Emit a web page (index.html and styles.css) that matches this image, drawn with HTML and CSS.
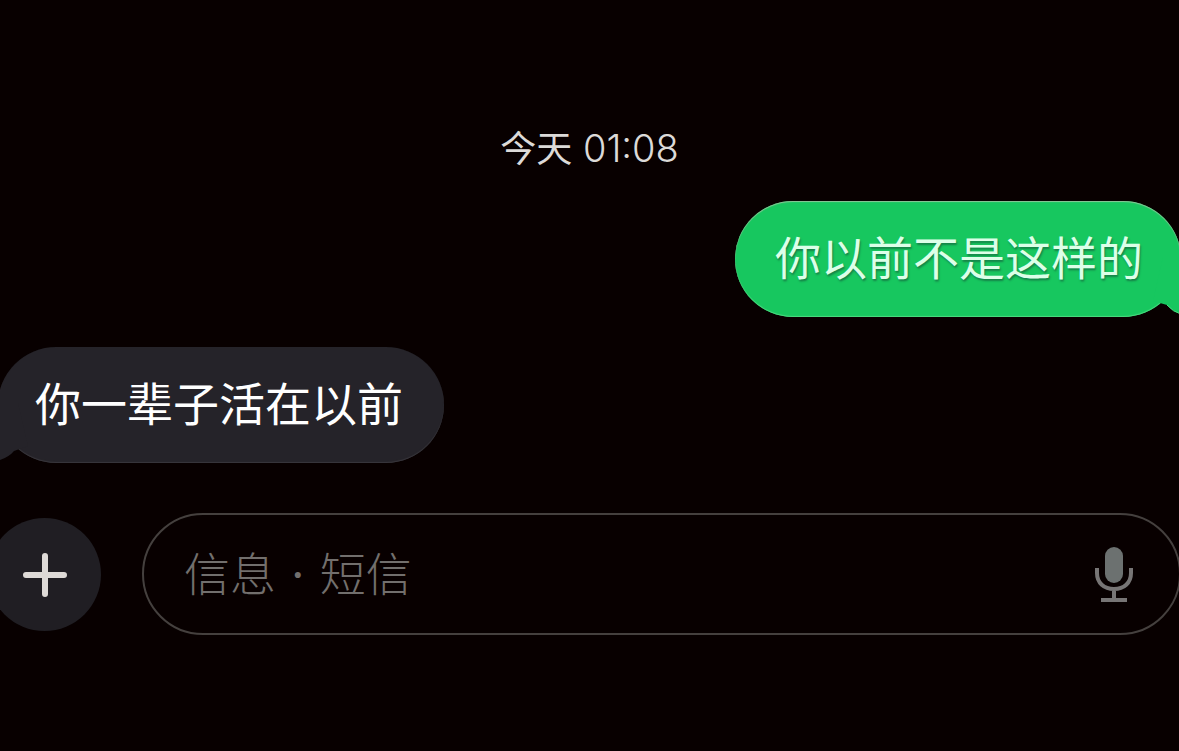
FILE: index.html
```html
<!DOCTYPE html>
<html lang="zh-CN">
<head>
<meta charset="utf-8">
<meta name="viewport" content="width=device-width, initial-scale=1">
<title>信息</title>
<link rel="stylesheet" href="styles.css">
</head>
<body>
<main class="chat">
  <time class="stamp" datetime="01:08">今天<span class="clock"> 01:08</span></time>
  <section class="thread">
    <p class="bubble sent">你以前不是这样的
      <svg class="tail" viewBox="0 0 28 60" aria-hidden="true"><path d="M10 0H28V57Q20 55 14 48L0 44Z"/><path class="edge" d="M14 48Q20 55 28 57"/></svg>
    </p>
    <p class="bubble received">你一辈子活在以前
      <svg class="tail" viewBox="0 0 28 60" aria-hidden="true"><path d="M18 0H0V57Q9 54 14 48L28 43Z"/></svg>
    </p>
  </section>
  <form class="composer">
    <button class="add" type="button" aria-label="添加">
      <svg viewBox="0 0 48 48" aria-hidden="true"><path d="M24 5V43M5 24H43"/></svg>
    </button>
    <div class="field">
      <input class="entry" type="text" aria-label="信息" placeholder="信息 · 短信">
      <button class="mic" type="button" aria-label="听写">
        <svg viewBox="0 0 40 58" aria-hidden="true"><rect x="11" y="1" width="18" height="36" rx="9"/><path d="M3 22V27C3 37 10 43 20 43S37 37 37 27V22M20 43V54M7 54H33"/></svg>
      </button>
    </div>
  </form>
</main>
</body>
</html>
```
FILE: styles.css
```css
* { box-sizing: border-box; }

body {
  margin: 0;
  background: #080000;
  color: #fff;
  font-family: "Noto Sans CJK SC", sans-serif;
}

.chat {
  display: flex;
  flex-direction: column;
  min-height: 100vh;
  padding-top: 120px;
  overflow: hidden;
}

.stamp {
  align-self: center;
  font-size: 36px;
  line-height: 52px;
  color: #dcdad8;
}

.clock {
  font-family: Inter, sans-serif;
  font-size: 38px;
  font-weight: 300;
  line-height: 1;
  white-space: pre;
}

.thread {
  display: flex;
  flex-direction: column;
  gap: 30px;
  margin: 29px -2px 0;
}

.bubble {
  position: relative;
  margin: 0;
  padding: 20px 38px 28px 40px;
  border-radius: 58px;
  font-size: 46px;
  line-height: 68px;
}

.sent {
  align-self: flex-end;
  background: #17c75f;
  color: #dcffe8;
  box-shadow: inset 0 1px 1px #8fc599, inset 0 -1px 1px #4bdc80;
  text-shadow: 1px 2px 2px #168348;
}

.received {
  align-self: flex-start;
  padding: 20px 41px 28px 37px;
  background: #252329;
  box-shadow: inset 0 -1px 1px #39373c;
}

.tail {
  position: absolute;
  bottom: 0;
  width: 28px;
  height: 60px;
}

.sent .tail { right: 0; fill: #17c75f; }
.received .tail { left: 2px; fill: #252329; }
.tail .edge { fill: none; stroke: #4bdc80; }

.composer {
  display: flex;
  align-items: center;
  gap: 41px;
  margin: 50px -2px 0 -12px;
}

.add,
.mic {
  display: grid;
  flex: none;
  place-items: center;
  padding: 0;
  border: 0;
  background: none;
}

.add {
  width: 113px;
  height: 113px;
  padding-top: 2px;
  border-radius: 50%;
  background: #201e23;
}

.add svg {
  width: 48px;
  height: 48px;
  fill: none;
  stroke: #dedad7;
  stroke-width: 6;
  stroke-linecap: round;
}

.field {
  display: flex;
  flex: 1;
  align-items: center;
  min-width: 0;
  height: 122px;
  padding: 0 45px 0 40px;
  border: 2px solid #45403e;
  border-radius: 61px;
}

.entry {
  flex: 1;
  min-width: 0;
  padding: 2px 0 0;
  border: 0;
  outline: 0;
  background: none;
  color: #fff;
  font-family: "DejaVu Serif", "Noto Sans CJK SC", sans-serif;
  font-size: 46px;
  font-weight: 300;
  line-height: 68px;
}

.entry::placeholder { color: #726f6d; opacity: 1; }

.mic { padding-top: 2px; }

.mic svg {
  width: 40px;
  height: 58px;
  fill: #6c7170;
}

.mic path {
  fill: none;
  stroke: #777575;
  stroke-width: 4;
}
```
